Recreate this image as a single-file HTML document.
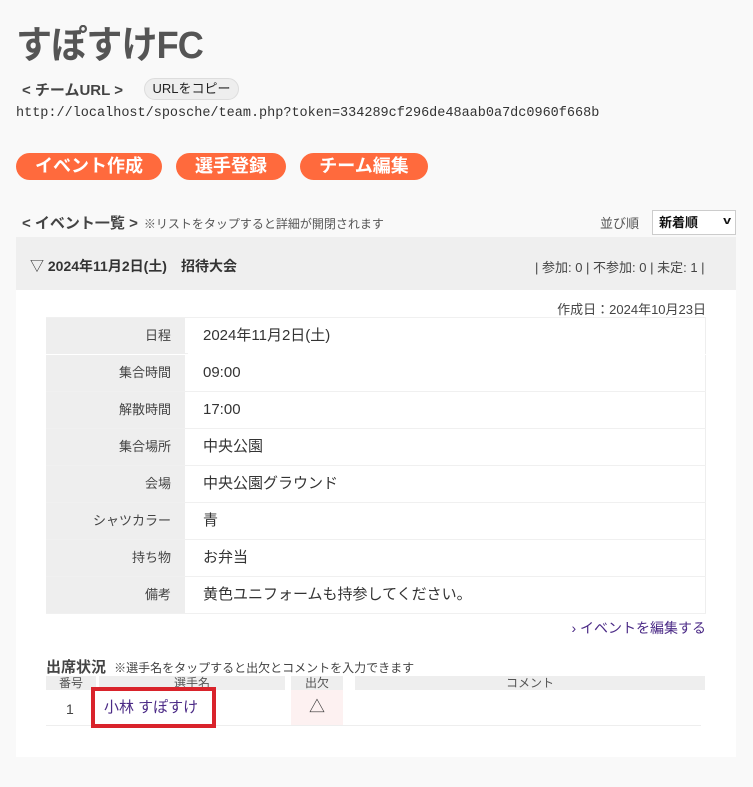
<!DOCTYPE html>
<html><head><meta charset="utf-8"><style>
*{margin:0;padding:0;box-sizing:border-box}
body{width:753px;height:787px;background:#f9f9f9;font-family:"Liberation Sans","Noto Sans CJK JP",sans-serif;color:#333;position:relative;overflow:hidden}
.a{position:absolute;white-space:nowrap}
.btn{position:absolute;top:153px;height:27px;background:#ff6a3d;color:#fff;border-radius:14px;font-size:18px;font-weight:bold;text-align:center;line-height:27px}
.row{position:absolute;left:46px;width:660px;height:37px;border-bottom:1px solid #f0f0f0}
.row .l{position:absolute;left:0;top:0;width:139px;height:36px;background:#eee;text-align:right;padding-right:14px;font-size:13px;line-height:36px;color:#444}
.row .v{position:absolute;left:142px;top:0;right:0;height:36px;background:#fff;border-right:1px solid #eee;padding-left:15px;font-size:15px;line-height:36px;color:#333}
</style></head><body>
<div class="a" style="left:16px;top:14px;font-size:38px;font-weight:bold;color:#555;letter-spacing:-1px;transform:scaleX(0.95);transform-origin:left">すぽすけFC</div>
<div class="a" style="left:22px;top:79px;font-size:15px;font-weight:bold;color:#444">&lt; チームURL &gt;</div>
<div class="a" style="left:144px;top:78px;width:95px;height:22px;border-radius:11px;background:#eee;border:1px solid #ddd;font-size:13px;line-height:20px;text-align:center;color:#222">URLをコピー</div>
<div class="a" style="left:16px;top:106px;font-family:'Liberation Mono',monospace;font-size:13.5px;color:#333;letter-spacing:0px">http://localhost/sposche/team.php?token=334289cf296de48aab0a7dc0960f668b</div>
<div class="btn" style="left:16px;width:146px">イベント作成</div>
<div class="btn" style="left:176px;width:110px">選手登録</div>
<div class="btn" style="left:300px;width:128px">チーム編集</div>
<div class="a" style="left:22px;top:212px;font-size:15px;font-weight:bold;color:#444">&lt; イベント一覧 &gt;<span style="font-size:12px;font-weight:normal;color:#555;margin-left:6px">※リストをタップすると詳細が開閉されます</span></div>
<div class="a" style="left:600px;top:213px;font-size:13px;color:#555">並び順</div>
<div class="a" style="left:652px;top:210px;width:84px;height:25px;background:#fff;border:1px solid #ccc;font-size:13px;font-weight:bold;line-height:23px;padding-left:6px;color:#111">新着順<span style="position:absolute;right:5px;top:-1px;font-size:11px;transform:scaleX(1.3)">v</span></div>
<div class="a" style="left:16px;top:237px;width:720px;height:53px;background:#efefef"></div>
<div class="a" style="left:30px;top:256px;font-size:14px;color:#333">▽ <b>2024年11月2日(土)　招待大会</b></div>
<div class="a" style="left:535px;top:257px;font-size:13px;color:#444">| 参加: 0 | 不参加: 0 | 未定: 1 |</div>
<div class="a" style="left:16px;top:290px;width:720px;height:467px;background:#fff"></div>
<div class="a" style="right:47px;top:299px;font-size:13px;color:#444">作成日：2024年10月23日</div>
<div class="row" style="top:317px;border-top:1px solid #f0f0f0"><div class="l">日程</div><div class="v">2024年11月2日(土)</div></div>
<div class="row" style="top:355px"><div class="l">集合時間</div><div class="v">09:00</div></div>
<div class="row" style="top:392px"><div class="l">解散時間</div><div class="v">17:00</div></div>
<div class="row" style="top:429px"><div class="l">集合場所</div><div class="v">中央公園</div></div>
<div class="row" style="top:466px"><div class="l">会場</div><div class="v">中央公園グラウンド</div></div>
<div class="row" style="top:503px"><div class="l">シャツカラー</div><div class="v">青</div></div>
<div class="row" style="top:540px"><div class="l">持ち物</div><div class="v">お弁当</div></div>
<div class="row" style="top:577px"><div class="l">備考</div><div class="v">黄色ユニフォームも持参してください。</div></div>
<div class="a" style="right:47px;top:618px;font-size:14px;color:#4b2a86">› イベントを編集する</div>
<div class="a" style="left:46px;top:656px;font-size:15px;font-weight:bold;color:#444">出席状況 <span style="font-size:12px;font-weight:normal;color:#444;margin-left:4px">※選手名をタップすると出欠とコメントを入力できます</span></div>
<div class="a" style="left:46px;top:676px;width:50px;height:14px;background:#eee;font-size:12px;line-height:14px;text-align:center;color:#555">番号</div>
<div class="a" style="left:99px;top:676px;width:186px;height:14px;background:#eee;font-size:12px;line-height:14px;text-align:center;color:#555">選手名</div>
<div class="a" style="left:291px;top:676px;width:52px;height:14px;background:#eee;font-size:12px;line-height:14px;text-align:center;color:#555">出欠</div>
<div class="a" style="left:355px;top:676px;width:350px;height:14px;background:#eee;font-size:12px;line-height:14px;text-align:center;color:#555">コメント</div>
<div class="a" style="left:46px;top:725px;width:655px;height:1px;background:#eee"></div>
<div class="a" style="left:66px;top:701px;font-size:14px;color:#444">1</div>
<div class="a" style="left:291px;top:690px;width:52px;height:35px;background:#fdf1f1;font-size:16px;text-align:center;line-height:35px;color:#333">△</div>
<div class="a" style="left:91px;top:687px;width:125px;height:41px;border:4px solid #d9232b;background:#fff;font-size:15px;line-height:33px;padding-left:9px;color:#4b2a86">小林 すぽすけ</div>
</body></html>
